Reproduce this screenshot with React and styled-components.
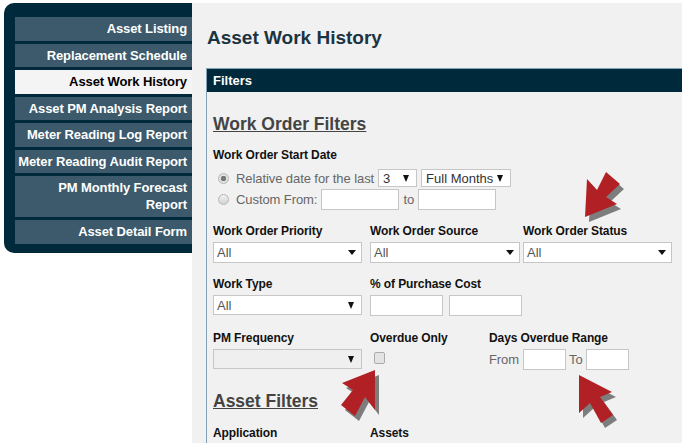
import React from 'react';
import styled, { createGlobalStyle } from 'styled-components';

const Global = createGlobalStyle`
html, body {
  margin: 0;
  height: 100%;
  overflow: hidden;
  background: #fff;
  font-family: "Liberation Sans", Arial, sans-serif;
}
`;

const menu = [
  'Asset Listing',
  'Replacement Schedule',
  'Asset Work History',
  'Asset PM Analysis Report',
  'Meter Reading Log Report',
  'Meter Reading Audit Report',
  'PM Monthly Forecast Report',
  'Asset Detail Form',
];

const Arrow = ({ points }) => (
  <>
    <polygon points={points} fill="#7d7d7d" transform="translate(4 5)" />
    <polygon points={points} fill="#b12024" />
  </>
);

const App = () => (
  <Page>
    <Global />
    <SideMenu>
      {menu.map((item) => (
        <MenuItem key={item} $active={item === 'Asset Work History'} $tall={item.startsWith('PM Monthly')}>
          {item}
        </MenuItem>
      ))}
    </SideMenu>
    <Main>
      <Title>Asset Work History</Title>
      <Panel>
        <PanelHead>Filters</PanelHead>
        <PanelBody>
          <SectionTitle>Work Order Filters</SectionTitle>
          <Label>Work Order Start Date</Label>
          <DateRow>
            <Radio $checked />
            <Muted>Relative date for the last</Muted>
            <InlineSelect $w={39}>3<Caret $narrow /></InlineSelect>
            <InlineSelect $w={90}>Full Months<Caret $narrow /></InlineSelect>
          </DateRow>
          <DateRow $second>
            <Radio />
            <Muted>Custom From:</Muted>
            <TextBox $w={78} $h={21} />
            <Muted>to</Muted>
            <TextBox $w={78} $h={21} />
          </DateRow>

          <FieldRow $top={14}>
            <Field $w={157}>
              <Label>Work Order Priority</Label>
              <Select $w={149}>All<Caret /></Select>
            </Field>
            <Field $w={153}>
              <Label>Work Order Source</Label>
              <Select $w={150}>All<Caret /></Select>
            </Field>
            <Field $w={149}>
              <Label>Work Order Status</Label>
              <Select $w={149}>All<Caret /></Select>
            </Field>
          </FieldRow>

          <FieldRow $top={14}>
            <Field $w={157}>
              <Label>Work Type</Label>
              <Select $w={149} $h={20}>All<Caret $narrow /></Select>
            </Field>
            <Field $w={200}>
              <Label>% of Purchase Cost</Label>
              <Pair>
                <TextBox $w={73} $h={21} />
                <TextBox $w={73} $h={21} />
              </Pair>
            </Field>
          </FieldRow>

          <FieldRow $top={15}>
            <Field $w={157}>
              <Label>PM Frequency</Label>
              <Select $w={149} $h={20} $disabled><span /><Caret $narrow /></Select>
            </Field>
            <Field $w={119}>
              <Label>Overdue Only</Label>
              <CheckBox />
            </Field>
            <Field $w={170}>
              <Label>Days Overdue Range</Label>
              <RangeRow>
                <Muted>From</Muted>
                <TextBox $w={43} $h={21} />
                <Muted>To</Muted>
                <TextBox $w={43} $h={21} />
              </RangeRow>
            </Field>
          </FieldRow>

          <SectionTitle $second>Asset Filters</SectionTitle>
          <FieldRow $top={14}>
            <Field $w={157}>
              <Label>Application</Label>
            </Field>
            <Field $w={153}>
              <Label>Assets</Label>
            </Field>
          </FieldRow>
        </PanelBody>
      </Panel>
    </Main>
    <Arrows viewBox="0 0 682 443" width="682" height="443">
      <Arrow points="585,217 587,179 597,190 606,172 620,184 606,197 617,204" />
      <Arrow points="375,370 342,383 353,390 341,405 355,416 365,397 375,410" />
      <Arrow points="579,375 612,392 600,397 613,415 601,423 590,403 579,413" />
    </Arrows>
  </Page>
);

export default App;

const Page = styled.div`
  position: relative;
  width: 682px;
  height: 443px;
  overflow: hidden;
  display: flex;
  align-items: flex-start;
  padding-top: 3px;
  box-sizing: border-box;
`;

const SideMenu = styled.nav`
  margin-left: 4px;
  width: 188px;
  height: 250px;
  box-sizing: border-box;
  flex-shrink: 0;
  background: #00293c;
  border-radius: 10px 0 0 10px;
  padding: 14px 0 0 11px;
  display: flex;
  flex-direction: column;
  gap: 3px;
`;

const MenuItem = styled.div`
  min-height: ${(p) => (p.$tall ? 41 : 23.5)}px;
  box-sizing: border-box;
  padding: 3px 5px 0 2px;
  text-align: right;
  font-size: 13px;
  font-weight: bold;
  line-height: 17px;
  letter-spacing: -0.1px;
  background: ${(p) => (p.$active ? '#f4f4f4' : '#3c5a6b')};
  color: ${(p) => (p.$active ? '#000' : '#fff')};
`;

const Main = styled.main`
  flex: 1;
  height: 440px;
  background: #f1f1f1;
  padding: 23px 0 0 15px;
  box-sizing: border-box;
  overflow: hidden;
`;

const Title = styled.h1`
  margin: 0 0 18px;
  font-size: 19px;
  line-height: 24px;
  font-weight: bold;
  color: #1c3442;
`;

const Panel = styled.section`
  margin-left: -1px;
  border: 1px solid #7fa3b5;
  border-right: none;
  height: 400px;
`;

const PanelHead = styled.div`
  height: 23px;
  background: #00293c;
  color: #fff;
  font-size: 13px;
  font-weight: bold;
  line-height: 23px;
  padding-left: 6px;
`;

const PanelBody = styled.div`
  padding: 21px 0 0 6px;
`;

const SectionTitle = styled.h2`
  margin: ${(p) => (p.$second ? '20px' : '0')} 0 0;
  font-size: 17.5px;
  line-height: 22px;
  font-weight: bold;
  color: #444;
  text-decoration: underline;
  ${(p) => (p.$second ? '' : 'margin-bottom: 13px;')}
`;

const Label = styled.div`
  font-size: 12px;
  font-weight: bold;
  line-height: 15px;
  letter-spacing: -0.1px;
  color: #111;
`;

const DateRow = styled.div`
  display: flex;
  align-items: center;
  gap: 4px;
  height: ${(p) => (p.$second ? 21 : 18)}px;
  margin-top: ${(p) => (p.$second ? 2 : 6)}px;
  padding-left: 5px;
`;

const Radio = styled.span`
  width: 11px;
  height: 11px;
  margin-right: 3px;
  border-radius: 50%;
  border: 1px solid #b5b5b5;
  box-sizing: border-box;
  background: ${(p) =>
    p.$checked
      ? 'radial-gradient(circle, #777 0 2.5px, #e2e2e2 3px)'
      : 'linear-gradient(#f2f2f2, #d2d2d2)'};
`;

const Muted = styled.span`
  font-size: 13px;
  letter-spacing: -0.08px;
  color: #666;
`;

const TextBox = styled.div`
  width: ${(p) => p.$w}px;
  height: ${(p) => p.$h}px;
  box-sizing: border-box;
  background: #fff;
  border: 1px solid #c6c6c6;
`;

const Select = styled.div`
  width: ${(p) => p.$w}px;
  height: ${(p) => p.$h || 21}px;
  box-sizing: border-box;
  display: flex;
  align-items: center;
  justify-content: space-between;
  padding: 0 4px 0 3px;
  margin-top: 3px;
  font-size: 13px;
  color: #555;
  background: ${(p) => (p.$disabled ? '#efefef' : '#fff')};
  border: 1px solid #c6c6c6;
`;

const InlineSelect = styled(Select)`
  height: 18px;
  margin-top: 0;
  padding-left: 4px;
  color: #333;
`;

const Caret = styled.i`
  width: 0;
  height: 0;
  border-left: ${(p) => (p.$narrow ? 3.5 : 4)}px solid transparent;
  border-right: ${(p) => (p.$narrow ? 3.5 : 4)}px solid transparent;
  border-top: ${(p) => (p.$narrow ? 7 : 5)}px solid #111;
  margin-right: ${(p) => (p.$narrow ? 3 : 1)}px;
`;

const FieldRow = styled.div`
  display: flex;
  margin-top: ${(p) => p.$top}px;
`;

const Field = styled.div`
  width: ${(p) => p.$w}px;
  flex-shrink: 0;
`;

const Pair = styled.div`
  display: flex;
  gap: 6px;
  margin-top: 3px;
`;

const CheckBox = styled.div`
  width: 11px;
  height: 12px;
  margin: 6px 0 0 4px;
  box-sizing: border-box;
  border: 1px solid #ababab;
  border-radius: 2px;
  background: #e4e4e4;
`;

const RangeRow = styled.div`
  display: flex;
  align-items: center;
  gap: 3.5px;
  margin-top: 3px;
`;

const Arrows = styled.svg`
  position: absolute;
  left: 0;
  top: 0;
  pointer-events: none;
`;
